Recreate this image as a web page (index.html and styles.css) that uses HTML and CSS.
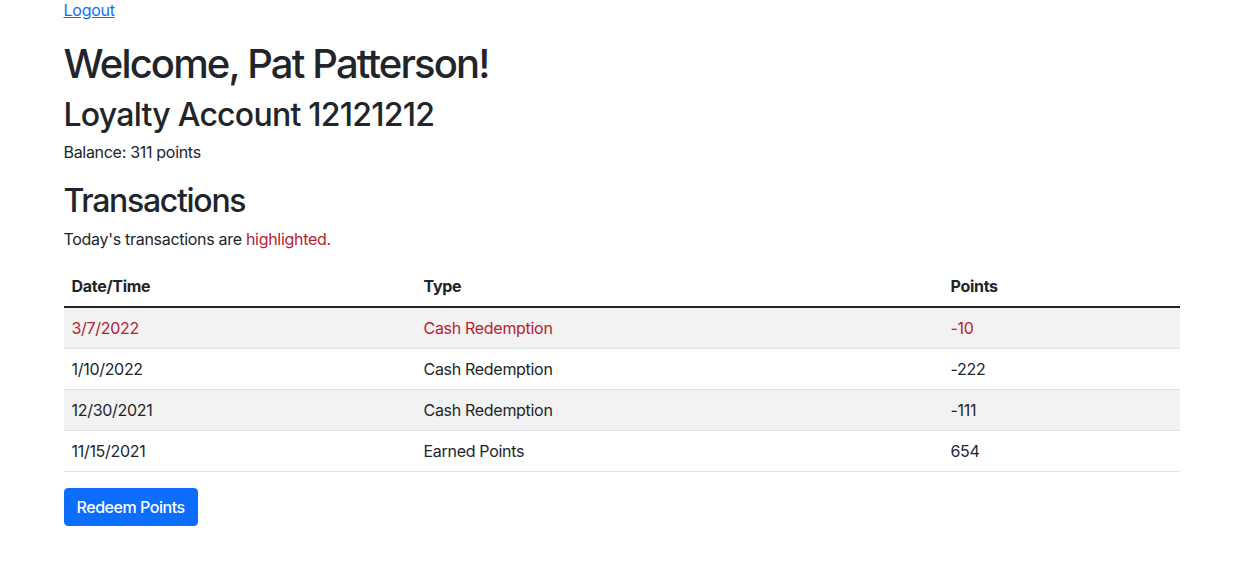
FILE: index.html
```html
<!DOCTYPE html>
<html lang="en">
<head>
  <meta charset="UTF-8" />
  <meta name="viewport" content="width=device-width, initial-scale=1.0"/>
  <title>Loyalty Account</title>
  <link rel="stylesheet" href="styles.css">
</head>
<body>
  <div class="container">
    <p class="top-link"><a href="#">Logout</a></p>

    <h1>Welcome, Pat Patterson!</h1>
    <h2 class="account-title">Loyalty Account 12121212</h2>
    <p>Balance: 311 points</p>

    <h2 class="section-title">Transactions</h2>
    <p class="note">Today's transactions are <span class="today">highlighted.</span></p>

    <table class="table">
      <colgroup>
        <col class="col-date">
        <col class="col-type">
        <col class="col-points">
      </colgroup>
      <thead>
        <tr>
          <th>Date/Time</th>
          <th>Type</th>
          <th>Points</th>
        </tr>
      </thead>
      <tbody>
        <tr class="today">
          <td>3/7/2022</td>
          <td>Cash Redemption</td>
          <td>-10</td>
        </tr>
        <tr>
          <td>1/10/2022</td>
          <td>Cash Redemption</td>
          <td>-222</td>
        </tr>
        <tr>
          <td>12/30/2021</td>
          <td>Cash Redemption</td>
          <td>-111</td>
        </tr>
        <tr>
          <td>11/15/2021</td>
          <td>Earned Points</td>
          <td>654</td>
        </tr>
      </tbody>
    </table>

    <button class="btn-primary" type="button">Redeem Points</button>
  </div>
</body>
</html>
```

FILE: styles.css
```css
/* ===== Base ===== */
* {
  box-sizing: border-box;
}
body {
  margin: 0;
  font-family: Inter, "Noto Sans", sans-serif;
  font-size: 16px;
  line-height: 1.5;
  letter-spacing: -0.3px;
  color: #212529;
  background-color: #fff;
}
.container {
  width: 100%;
  max-width: 1140px;
  margin: 0 auto;
  padding: 0 12px;
}
p {
  margin: 0 0 18px;
}
a {
  color: #0d6efd;
  text-decoration: underline;
}
h1, h2 {
  margin: 0 0 6px;
  font-weight: 500;
  line-height: 1.2;
}
h1 {
  margin-bottom: 8px;
  font-size: 40px;
  letter-spacing: -1.85px;
}
h2 {
  font-size: 32px;
}
.account-title {
  letter-spacing: -0.75px;
}
.section-title {
  letter-spacing: -1.3px;
}
.top-link {
  line-height: 20px;
  margin-bottom: 20px;
  letter-spacing: -0.25px;
}
.note {
  margin-bottom: 15px;
}
.today {
  color: #b42230;
}

/* ===== Table ===== */
.table {
  width: 100%;
  margin-bottom: 16px;
  border-collapse: collapse;
  table-layout: fixed;
}
.col-date { width: 352px; }
.col-type { width: 527px; }
.table th,
.table td {
  padding: 8px;
  text-align: left;
  border-bottom: 1px solid #dee2e6;
}
.table th {
  font-weight: 700;
}
.table thead th {
  border-bottom: 2px solid #212529;
}
.table tbody tr:nth-child(odd) td {
  background-color: #f2f2f2;
}
.table tbody tr.today td {
  color: #b42230;
}

/* ===== Button ===== */
.btn-primary {
  display: inline-block;
  padding: 6px 12px;
  font-family: inherit;
  font-size: 16px;
  font-weight: 500;
  line-height: 1.5;
  letter-spacing: -0.45px;
  color: #fff;
  background-color: #0d6efd;
  border: 1px solid #0d6efd;
  border-radius: 4px;
  cursor: pointer;
}
```
